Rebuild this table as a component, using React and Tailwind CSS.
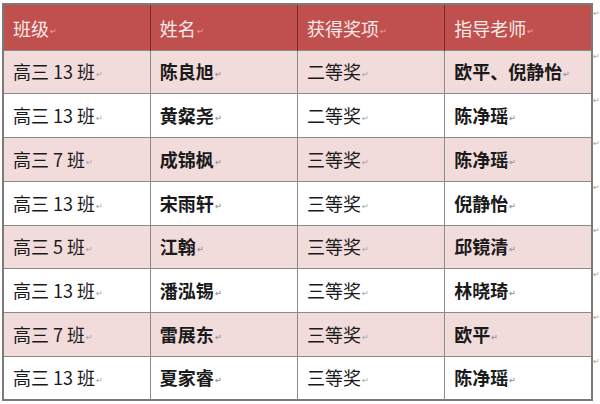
import React from "react";

const head = ["班级", "姓名", "获得奖项", "指导老师"];

const rows = [
  ["高三 13 班", "陈良旭", "二等奖", "欧平、倪静怡"],
  ["高三 13 班", "黄粲尧", "二等奖", "陈净瑶"],
  ["高三 7 班", "成锦枫", "三等奖", "陈净瑶"],
  ["高三 13 班", "宋雨轩", "三等奖", "倪静怡"],
  ["高三 5 班", "江翰", "三等奖", "邱镜清"],
  ["高三 13 班", "潘泓锡", "三等奖", "林晓琦"],
  ["高三 7 班", "雷展东", "三等奖", "欧平"],
  ["高三 13 班", "夏家睿", "三等奖", "陈净瑶"],
];

const font = { fontFamily: '"Noto Sans CJK SC", "Noto Sans", sans-serif' };

const Mark = ({ light }) => (
  <span className={`ml-[1px] align-middle text-[8px] ${light ? "text-[#e9a9a7]" : "text-[#a0a0a0]"}`}>↵</span>
);

export default function App() {
  return (
    <div className="w-[600px] h-[404px] bg-white pt-[3px] pl-[2px] flex" style={font}>
      <table className="w-[594px] h-[398px] border-collapse border-2 border-[#7a7a7a] table-fixed">
        <thead>
          <tr className="h-[46px] bg-[#c0504d]">
            {head.map((h, i) => (
              <th
                key={h}
                className={`pl-[9px] pt-[2px] text-left font-normal text-[18px] text-[#fbeaea] ${i > 0 ? "border-l border-[#7a2826]" : ""}`}
              >
                {h}
                <Mark light />
              </th>
            ))}
          </tr>
        </thead>
        <tbody>
          {rows.map((r, ri) => (
            <tr key={ri} className={`h-[43.5px] border-t border-[#8a8a8a] ${ri % 2 === 0 ? "bg-[#f2dbdb]" : "bg-white"}`}>
              {r.map((c, ci) => (
                <td
                  key={ci}
                  className={`pl-[9px] text-[18px] text-[#1a1a1a] ${ci > 0 ? "border-l border-[#8a8a8a]" : ""} ${ci === 1 || ci === 3 ? "font-bold" : ""}`}
                >
                  {c}
                  <Mark />
                </td>
              ))}
            </tr>
          ))}
        </tbody>
      </table>
      <div className="flex flex-col">
        <div className="h-[46px] text-[8px] leading-[20px] text-[#a0a0a0]">↵</div>
        {rows.map((_, i) => (
          <div key={i} className="h-[43.5px] text-[8px] leading-[14px] text-[#a0a0a0]">↵</div>
        ))}
      </div>
    </div>
  );
}
